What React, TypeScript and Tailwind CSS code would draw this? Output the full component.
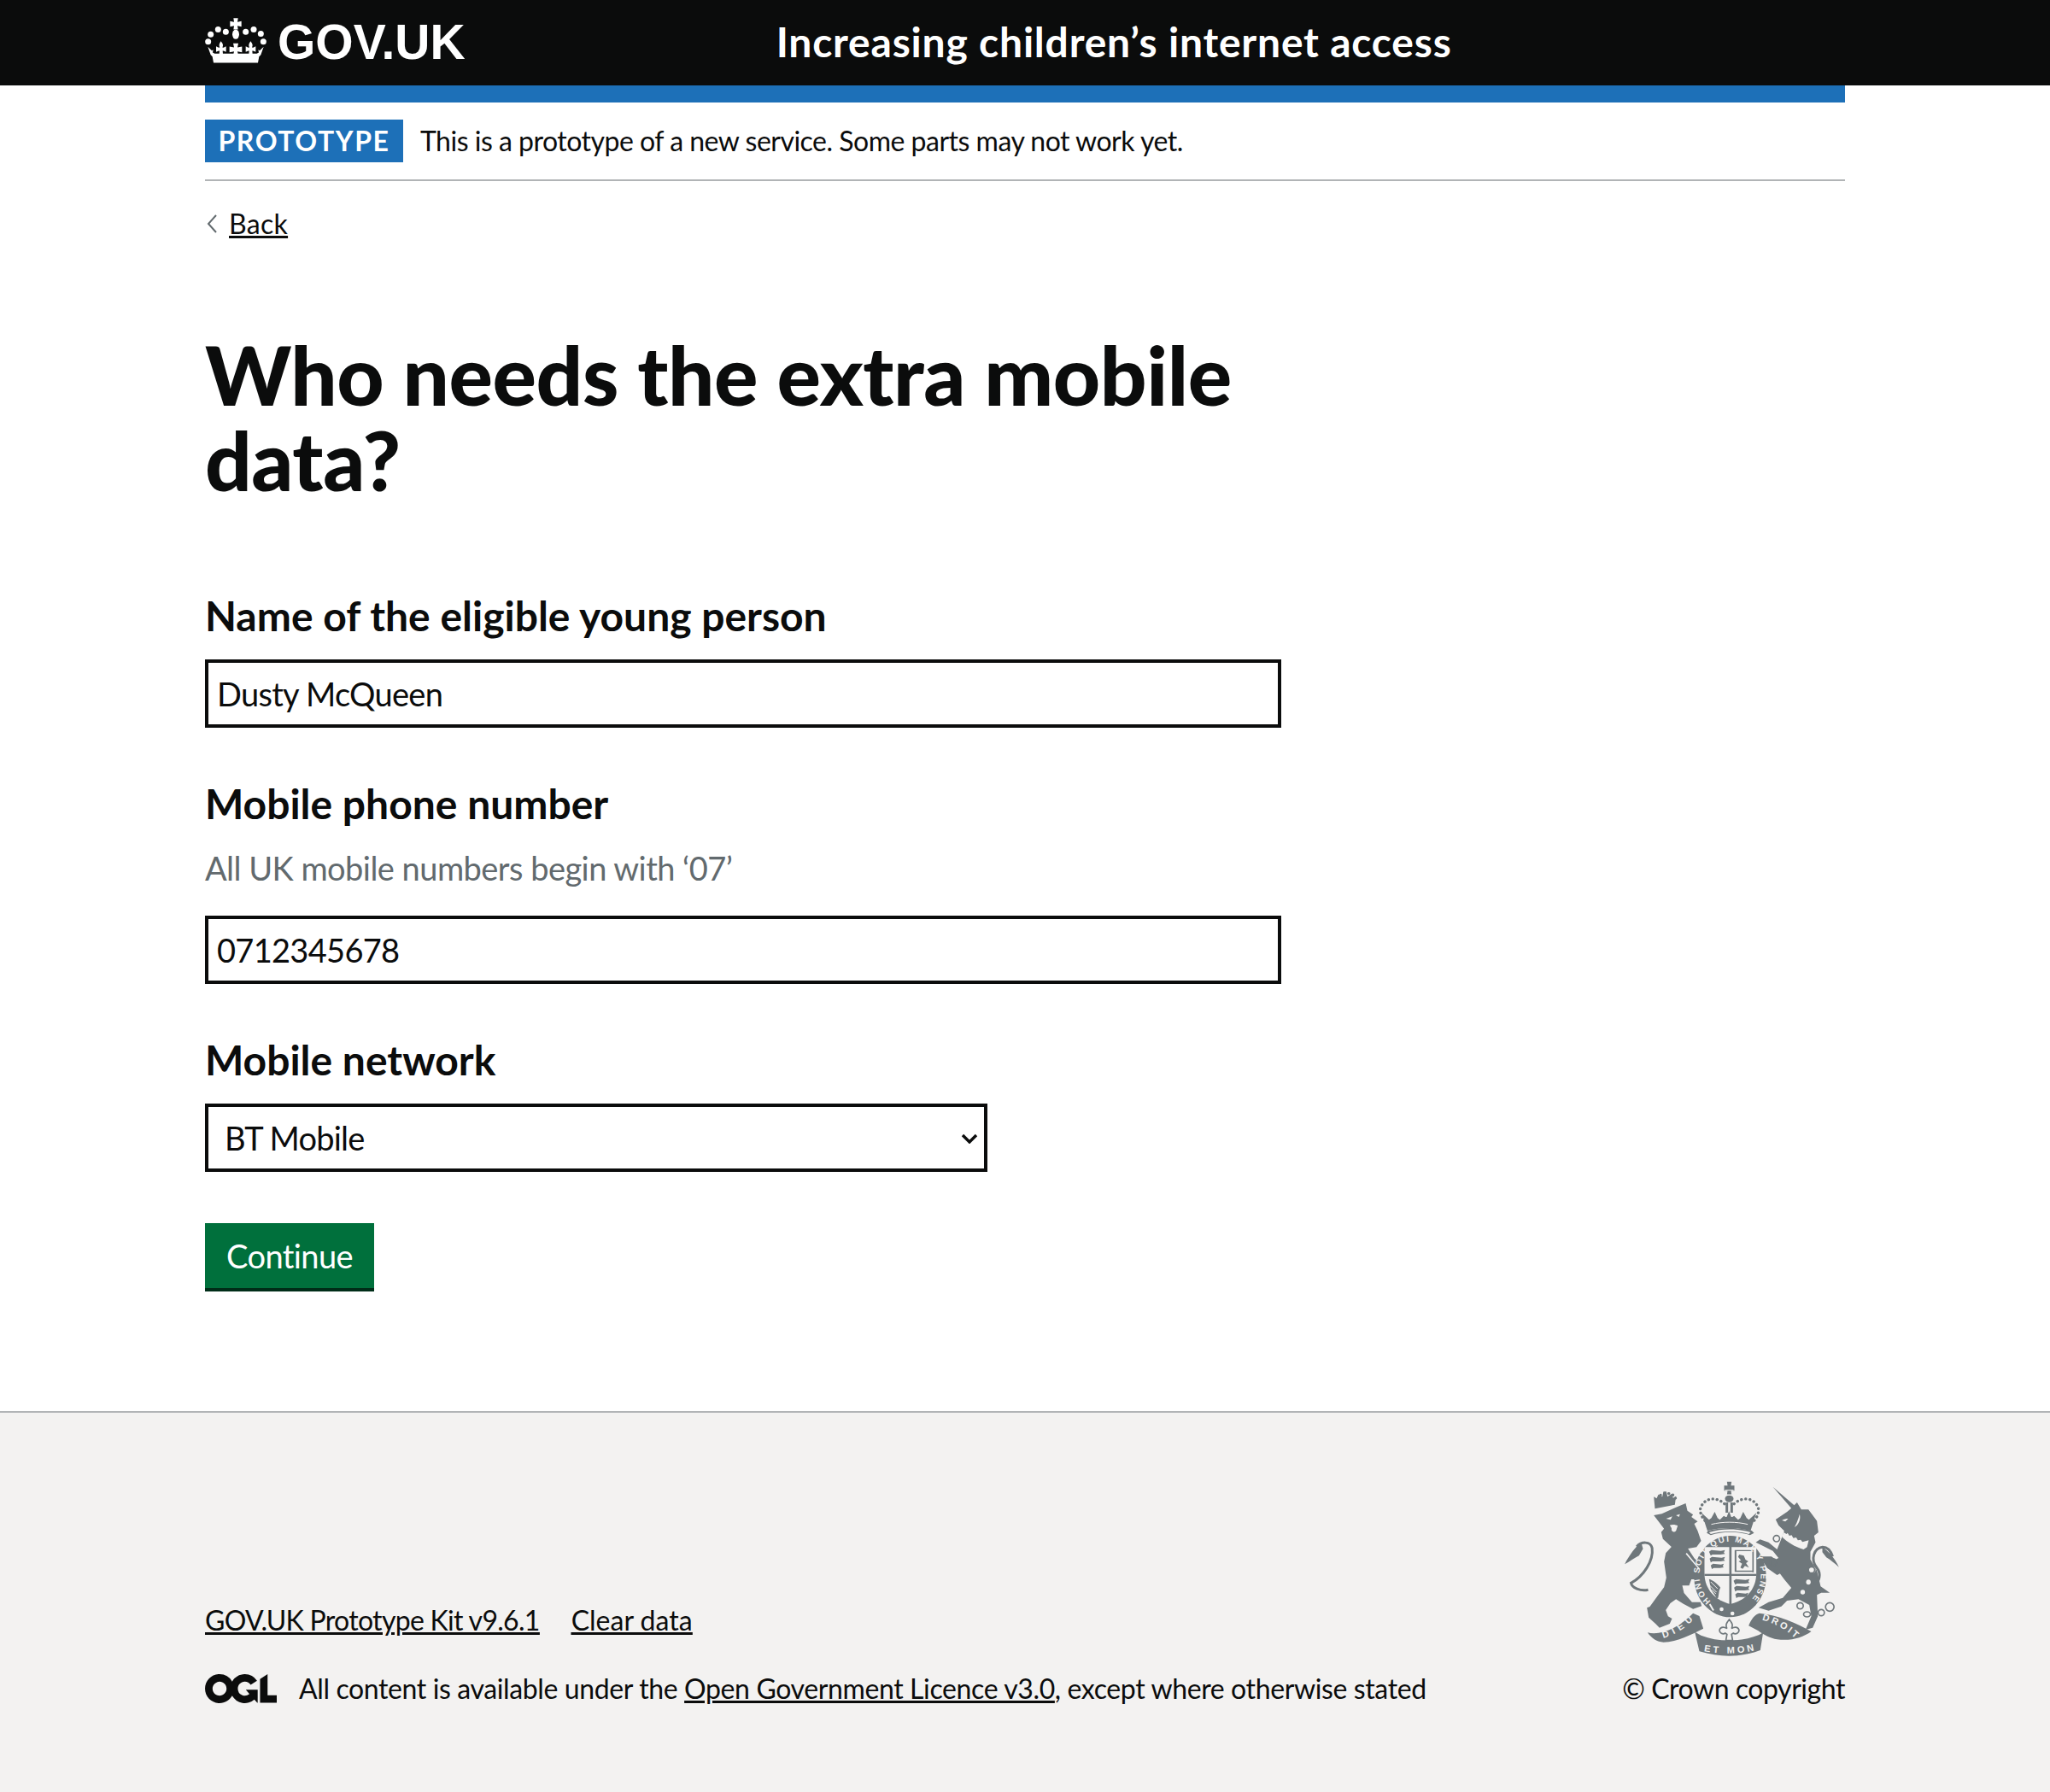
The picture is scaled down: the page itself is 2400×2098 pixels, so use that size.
const font = "font-['Lato','Noto_Sans',sans-serif]";

function CrownLogo() {
  const pearls = [[32, 72], [58, 55], [85, 63], [155, 63], [183, 55], [208, 70], [23, 98], [217, 98]];
  return (
    <svg viewBox="12 15 216 158" className="-mt-[6px] h-[53px] w-[72px] shrink-0 fill-white" aria-hidden="true">
      <path d="M112 15h16l-2 14 14-3v19l-14-3 2 13h-16l2-13-14 3V26l14 3z" />
      <ellipse cx="120" cy="72" rx="12" ry="17" />
      {pearls.map(([x, y]) => (
        <circle key={`${x}-${y}`} cx={x} cy={y} r="10.5" />
      ))}
      {/* left fleur, centre cross, right fleur */}
      <path d="M68 96c7 9 9 14 5 22l4 1 9-5v20l-9-4-3 0 1 12H62l1-12h-3l-9 4v-20l9 5 4-1c-4-8-2-13 4-22z" />
      <path d="M172 96c7 9 9 14 5 22l4 1 9-5v20l-9-4-3 0 1 12h-13l1-12h-3l-9 4v-20l9 5 4-1c-4-8-2-13 4-22z" />
      <path d="M111 104h18l-3 14 16-3v20l-16-3 3 14h-18l3-14-16 3v-20l16 3z" />
      <path d="M22 116l14 13 5-3-2 10 7 4 148 0 7-4-2-10 5 3 14-13-10 28-6 6-4 22H42l-4-22-6-6z" />
    </svg>
  );
}

function OglLogo() {
  return (
    <svg viewBox="0 0 483.2 195.7" className="h-[34px] w-[84px] shrink-0" aria-hidden="true">
      <path
        fill="#0b0c0c"
        d="M421.5 142.8V.1l-50.7 32.3v161.1h112.4v-50.7zm-122.3-9.6A47.12 47.12 0 0 1 221 97.8c0-26 21.1-47.1 47.1-47.1 16.7 0 31.4 8.7 39.7 21.8l42.7-27.2A97.63 97.63 0 0 0 268.1 0c-36.5 0-68.3 20.1-85.1 49.7A98 98 0 0 0 97.8 0C43.9 0 0 43.9 0 97.8s43.9 97.8 97.8 97.8c36.5 0 68.3-20.1 85.1-49.7a97.76 97.76 0 0 0 149.6 25.4l19.4 22.2h3v-87.8h-80l24.3 27.5zM97.8 145c-26 0-47.1-21.1-47.1-47.1s21.1-47.1 47.1-47.1 47.2 21 47.2 47S123.8 145 97.8 145"
      />
    </svg>
  );
}

function LionBlobs({ x, y }: { x: number; y: number }) {
  return (
    <g transform={`translate(${x} ${y})`}>
      <path d="M0 6l8-6 34 3 14-3-4 9 4 5-16 2-28 0-6 4z" />
      <path d="M2 30l8-6 34 3 12-3-4 9 4 5-16 2-28 0-6 4z" />
      <path d="M6 54l8-6 28 3 10-3-4 9 4 4-14 2-22 0-6 4z" />
    </g>
  );
}

// royal arms, traced by eye from the reference
function Crest() {
  const c = "#6f777b";
  const bg = "#f3f2f1";
  return (
    <svg viewBox="70 70 755 615" className="mr-[6px] h-[205px] w-[252px]" aria-hidden="true">
      <defs>
        <path id="garter" d="M372 492A108 118 0 1 1 508 492" />
        <path id="dieu" d="M205 622C250 610 290 580 315 552" />
        <path id="etmon" d="M348 668C400 678 480 678 528 664" />
        <path id="droit" d="M552 558C600 570 640 595 672 625" />
      </defs>
      <g fill={c}>
        {/* lion */}
        <path d="M172 190l28-5 48-22 36-15 6 26 20 14-6 8 22 16-12 8 12 25 12 35-16 22-30 5 22 34 20 20 12 30-6 40-22-16-14 0-8 22-24 0 6 26 28 32 30 0 4 14-30 10-34-18-26-16-20 14-16 24 8 22 14 8-8 18-36 14-14-14-24-22-6-34 10-4 26-36 24-32 8-34-8-56 6-30 20-22-30-28-6-24 10-12z" />
        <path d="M172 125l10 6 6-14 14 8 4-18 10 0 4 18 14-10 6 14 10-6-4 30-70 14z" />
        <path fill="none" stroke={c} strokeWidth="9" d="M152 452C125 458 95 445 92 428C135 405 172 350 166 305C160 280 128 282 112 300" />
        <path d="M70 362c6-14 18-32 28-46 8-10 18-22 30-30l6 22-14 24c-16 8-32 20-50 30z" />
        {/* unicorn */}
        <path d="M590 90L665 155L675 145L690 170L715 170L745 210L750 250L735 262L740 285L722 318L722 345L745 385L758 440L790 462L760 462L745 470L748 545L730 585L705 592L725 545L718 505L680 485L640 490L620 510L575 525L540 515L575 495L625 480L655 445L630 415L615 395L605 400L570 375L545 335L585 335L600 345L610 340L590 315L550 295L530 285L545 275L575 285L605 310L625 260L630 245L610 225L600 205L640 178L655 165Z" />
        <path fill="none" stroke={c} strokeWidth="9" d="M735 430C755 425 760 395 745 375C720 345 735 305 765 302C785 302 795 320 800 335" />
        <path d="M822 372c-6-14-18-32-30-46-8-8-18-18-28-24l0 18 14 18c16 10 30 22 44 34z" />
        {/* crown over the shield */}
        <path d="M429 72h16l-2 14h12v18h-12l2 14h-16l2-14h-12V86h12z" />
        <ellipse cx="437" cy="132" rx="15" ry="12" />
        <path d="M424 145h9v36h-9zM441 145h9v36h-9z" />
        <path d="M340 182l26 24 8-6 12-22 10 22 8 6 14-14 6 4h4l8-20 8 20h4l6-4 14 14 8-6 10-22 12 22 8 6 26-24-20 62c-50-12-102-12-152 0z" />
        <path d="M362 244c48-12 106-12 154 0l8 8-14 8c-40-14-100-14-138 0l-14-8z" />
        {/* garter */}
        <ellipse cx="440" cy="405" rx="127" ry="143" />
        {/* ribbons */}
        <path d="M150 602c50 12 112-20 160-68l22 10 14 44c-40 20-90 46-140 48-22 0-42-14-56-34z" />
        <path d="M505 578c8-22 22-40 38-44 70 8 130 34 182 64-30 22-70 34-120 28-24-4-48-16-66-30z" />
        <path d="M316 600c8 4 18 10 22 12 60 24 140 24 204-2l14-8-10 62c-70 26-140 26-214 4z" />
      </g>
      {/* dots of the crown arches */}
      <g fill="none" stroke={c} strokeWidth="10" strokeDasharray="0.5 14.5" strokeLinecap="round">
        <path d="M420 150C395 125 350 125 336 165C332 185 346 205 358 215" />
        <path d="M454 150C480 125 525 125 539 165C543 185 530 205 518 215" />
        <path d="M188 132C188 110 240 105 248 130" />
      </g>
      {/* lion and unicorn details */}
      <g fill={bg}>
        <path d="M215 202l22-8-6 12zM250 190l14-4-4 10zM228 225c10-4 22-2 28 2l-6 18c-6 6-14 4-16-4 2-6-2-10-6-16z" />
        <path d="M178 172l76-20 2 6-74 22z" />
        <path d="M288 322l46 56-4 2-46-54z" />
        <path d="M628 250l10 6 4-4 6 10 8-2 6 10 10-2 6 10 10-2 6 8 22-6-6 24-12 8c-30-8-58-26-76-44z" />
        <path d="M622 208c8-4 14-6 22-6l-10 10zM684 186c4 14 0 30-10 40l-8 6c8-14 14-30 18-46z" />
        <ellipse cx="715" cy="425" rx="8" ry="9" />
        <ellipse cx="695" cy="460" rx="8" ry="8" />
        <ellipse cx="728" cy="382" rx="12" ry="11" />
      </g>
      <g fill="none" stroke={c} strokeWidth="5">
        <circle cx="603" cy="272" r="11" />
        <circle cx="592" cy="355" r="12" />
        <circle cx="726" cy="382" r="11" />
        <circle cx="686" cy="508" r="11" />
        <ellipse cx="710" cy="538" rx="12" ry="9" />
        <circle cx="760" cy="532" r="11" />
        <circle cx="790" cy="512" r="15" />
      </g>
      {/* crowned cross and crown fleurs in negative */}
      <path d="M424 118h26M422 102h30" stroke={bg} strokeWidth="3" />
      <path d="M366 250c44-14 102-14 146 0l-6 6c-40-12-96-12-134 0z" fill={bg} />
      <path d="M374 222c40-10 88-10 128 0" stroke={bg} strokeWidth="3" fill="none" />
      {/* shield */}
      <path d="M350 302h182v92c0 58-40 96-91 108-51-12-91-50-91-108z" fill={bg} />
      <rect x="437" y="298" width="8" height="206" fill={c} />
      <rect x="350" y="396" width="182" height="7" fill={c} />
      <g fill={c}>
        <LionBlobs x={366} y={312} />
        <LionBlobs x={452} y={414} />
        <path d="M456 312h66v4h-60v72h-6zM518 312h5v78h-5zM456 384h66v5h-66z" />
        <path d="M472 328l16 4 6 14 10 6-8 6 10 16-14-6-8 10-8-4 6-14-12-8 8-4-10-12z" />
        <path d="M366 414c14 4 30 16 40 30l-4 10-4 26-6 2c-4-12-14-22-20-34z" />
      </g>
      <path d="M372 424l24 24M368 436l24 24M376 452l14 14" stroke={bg} strokeWidth="3" />
      {/* belt buckle dots */}
      <g fill={bg}>
        <circle cx="410" cy="520" r="7" />
        <circle cx="448" cy="535" r="7" />
        <rect x="372" y="500" width="6" height="26" transform="rotate(-30 375 513)" />
      </g>
      {/* fleur de lis */}
      <path d="M437 556c10 12 14 20 8 32 8-6 22-8 26 4 2 12-12 18-20 12l-6 4 4 22-24 0 4-22-6-4c-8 6-22 0-20-12 4-12 18-10 26-4-6-12-2-20 8-32z" fill={bg} stroke={c} strokeWidth="5" />
      <g fill={bg} fontFamily="Liberation Sans, sans-serif" fontWeight="700">
        <text fontSize="29">
          <textPath href="#garter" textLength="548" lengthAdjust="spacing">HONI SOIT QUI MAL Y PENSE</textPath>
        </text>
        <text fontSize="33">
          <textPath href="#dieu" textLength="125" lengthAdjust="spacing">DIEU</textPath>
        </text>
        <text fontSize="33">
          <textPath href="#etmon" textLength="178" lengthAdjust="spacing">ET MON</textPath>
        </text>
        <text fontSize="33">
          <textPath href="#droit" textLength="135" lengthAdjust="spacing">DROIT</textPath>
        </text>
      </g>
    </svg>
  );
}

function Field({ label, hint, value }: { label: string; hint?: string; value: string }) {
  return (
    <div className="mb-[64px]">
      <label className="mb-[26px] block text-[48px] leading-[50px] font-bold text-[#0b0c0c]">{label}</label>
      {hint && <div className="-mt-[1px] mb-[31px] text-[38px] leading-[50px] tracking-[-0.54px] text-[#626a6e]">{hint}</div>}
      <input
        defaultValue={value}
        className="block h-[80px] w-[1260px] border-4 border-[#0b0c0c] bg-white px-[10px] text-[38px] tracking-[-0.7px] text-[#0b0c0c]"
      />
    </div>
  );
}

export default function App() {
  return (
    <div className={`${font} min-h-[2098px] bg-white text-[#0b0c0c]`}>
      <header className="h-[100px] bg-[#0b0c0c]">
        <div className="mx-[240px] flex h-full items-center">
          <CrownLogo />
          <span className="ml-[13px] -mt-[2px] font-['Liberation_Sans',sans-serif] text-[57px] leading-none font-bold text-white">GOV.UK</span>
          <span className="ml-[364px] -mt-[2px] text-[48px] leading-none font-bold tracking-[0.8px] text-white">Increasing children’s internet access</span>
        </div>
      </header>

      <div className="mx-[240px]">
        <div className="h-[20px] bg-[#1d70b8]" />
        <div className="flex items-center border-b-2 border-[#b1b4b6] pt-[20px] pb-[20px]">
          <strong className="flex h-[50px] w-[232px] items-center justify-center bg-[#1d70b8] text-[32px] font-bold tracking-[1.6px] text-white">PROTOTYPE</strong>
          <span className="ml-[20px] text-[32px] leading-none tracking-[-0.5px]">This is a prototype of a new service. Some parts may not work yet.</span>
        </div>

        <a href="#" className="mt-[30px] flex h-[40px] items-center text-[32px] tracking-[0.3px] text-[#0b0c0c]">
          <svg viewBox="0 0 14 24" className="mr-[12px] h-[24px] w-[16px]" fill="none" stroke="#626a6e" strokeWidth="2" aria-hidden="true">
            <path d="M12 2L3 12l9 10" />
          </svg>
          <span className="underline">Back</span>
        </a>

        <main className="pt-[106px]">
          <h1 className="mb-[108px] w-[1260px] text-[96px] leading-[100px] font-black tracking-[-0.45px]">Who needs the extra mobile data?</h1>
          <Field label="Name of the eligible young person" value="Dusty McQueen" />
          <Field label="Mobile phone number" hint="All UK mobile numbers begin with ‘07’" value="0712345678" />
          <label className="mb-[26px] block text-[48px] leading-[50px] font-bold">Mobile network</label>
          <div className="relative w-[916px]">
            <select className="block h-[80px] w-full appearance-none border-4 border-[#0b0c0c] bg-white pl-[19px] text-[38px] tracking-[-0.8px]" defaultValue="BT Mobile">
              <option>BT Mobile</option>
            </select>
            <svg viewBox="0 0 20 12" className="pointer-events-none absolute top-[35px] right-[11px] h-[12px] w-[20px]" fill="none" stroke="#0b0c0c" strokeWidth="3.4" aria-hidden="true">
              <path d="M2 2l8 8 8-8" />
            </svg>
          </div>
          <button className="mt-[60px] h-[80px] w-[198px] border-b-4 border-[#002d18] bg-[#00703c] text-[38px] tracking-[-0.6px] text-white">Continue</button>
        </main>
      </div>

      <footer className="mt-[140px] border-t-2 border-[#b1b4b6] bg-[#f3f2f1] px-[240px] pt-[80px] pb-[102px]">
        <div className="flex items-end justify-between">
          <div className="text-[32px] leading-[40px]">
            <div className="mb-[40px] flex gap-[37px] underline">
              <a href="#" className="tracking-[-0.7px]">GOV.UK Prototype Kit v9.6.1</a>
              <a href="#">Clear data</a>
            </div>
            <div className="flex items-center">
              <OglLogo />
              <span className="ml-[26px] tracking-[-0.38px]">
                All content is available under the <a href="#" className="underline">Open Government Licence v3.0</a>, except where otherwise stated
              </span>
            </div>
          </div>
          <div className="flex flex-col items-end">
            <Crest />
            <span className="mt-[18px] text-[32px] leading-[40px] tracking-[-0.45px]">© Crown copyright</span>
          </div>
        </div>
      </footer>
    </div>
  );
}
